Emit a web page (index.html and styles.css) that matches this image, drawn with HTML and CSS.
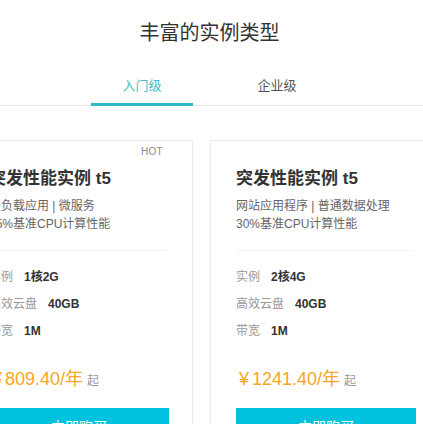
FILE: index.html
```html
<!DOCTYPE html>
<html lang="zh-CN">
<head>
<meta charset="utf-8">
<link rel="stylesheet" href="styles.css">
</head>
<body>
<div class="page">
  <h1 class="title">丰富的实例类型</h1>
  <div class="tabs">
    <div class="tab active">入门级</div>
    <div class="tab">企业级</div>
  </div>
  <div class="cards">
    <div class="card">
      <span class="hot">HOT</span>
      <div class="card-title">突发性能实例 t5</div>
      <div class="desc">轻负载应用 | 微服务<br>15%基准CPU计算性能</div>
      <div class="divider"></div>
      <div class="specs">
        <div class="row"><span class="label">实例</span><span class="value">1核2G</span></div>
        <div class="row"><span class="label">高效云盘</span><span class="value">40GB</span></div>
        <div class="row"><span class="label">带宽</span><span class="value">1M</span></div>
      </div>
      <div class="price"><span class="amount"><span class="yen">¥</span>809.40/年</span><span class="from">起</span></div>
      <button class="buy">立即购买</button>
    </div>
    <div class="card">
      <div class="card-title">突发性能实例 t5</div>
      <div class="desc">网站应用程序 | 普通数据处理<br>30%基准CPU计算性能</div>
      <div class="divider"></div>
      <div class="specs">
        <div class="row"><span class="label">实例</span><span class="value">2核4G</span></div>
        <div class="row"><span class="label">高效云盘</span><span class="value">40GB</span></div>
        <div class="row"><span class="label">带宽</span><span class="value">1M</span></div>
      </div>
      <div class="price"><span class="amount"><span class="yen">¥</span>1241.40/年</span><span class="from">起</span></div>
      <button class="buy">立即购买</button>
    </div>
  </div>
</div>
</body>
</html>
```
FILE: styles.css
```css
* { box-sizing: border-box; }
html, body {
  margin: 0;
  padding: 0;
  background: #fff;
  overflow: hidden;
}
body {
  font-family: "Liberation Sans", "Noto Sans CJK SC", sans-serif;
  color: #333;
  width: 423px;
  height: 424px;
}
.page {
  width: 423px;
  height: 424px;
  overflow: hidden;
}
.title {
  margin: 0;
  padding-top: 20px;
  height: 46px;
  line-height: 26px;
  font-size: 20px;
  font-weight: normal;
  text-align: center;
  color: #333;
  padding-right: 4px;
}
.tabs {
  margin-top: 28px;
  display: flex;
  justify-content: center;
  gap: 33px;
  border-bottom: 1px solid #e6e6e6;
  padding-right: 4px;
}
.tab {
  width: 102px;
  height: 32px;
  line-height: 24px;
  font-size: 13px;
  text-align: center;
  color: #555;
  margin-bottom: -1px;
}
.tab.active {
  color: #3cbfc9;
  border-bottom: 3px solid #33b8c6;
}
.cards {
  margin-top: 34px;
  display: flex;
  gap: 17px;
  margin-left: -37px;
}
.card {
  position: relative;
  flex: 0 0 230px;
  width: 230px;
  height: 320px;
  border: 1px solid #ececec;
  box-shadow: 0 1px 4px rgba(0, 0, 0, 0.04);
  padding: 26px 25px 0 25px;
  background: #fff;
}
.hot {
  position: absolute;
  top: 5px;
  right: 29px;
  font-size: 10px;
  color: #888;
  letter-spacing: 0.3px;
}
.card-title {
  font-size: 17px;
  font-weight: bold;
  line-height: 24px;
  color: #333;
  white-space: nowrap;
}
.desc {
  margin-top: 6px;
  font-size: 12px;
  line-height: 18px;
  color: #666;
  white-space: nowrap;
}
.divider {
  margin-top: 17px;
  height: 1px;
  background: #f4f4f4;
}
.specs {
  margin-top: 13px;
}
.row {
  height: 27px;
  line-height: 27px;
  font-size: 12px;
  white-space: nowrap;
}
.label {
  color: #999;
  margin-right: 11px;
}
.value {
  color: #333;
  font-size: 12px;
  font-weight: bold;
}
.price {
  margin-top: 22px;
  height: 24px;
  line-height: 24px;
  white-space: nowrap;
}
.amount {
  font-size: 18px;
  color: #f6a623;
}
.yen {
  margin-left: 3px;
  margin-right: 3px;
}
.from {
  font-size: 12px;
  color: #999;
  margin-left: 4px;
}
.buy {
  display: block;
  margin-top: 17px;
  width: 180px;
  height: 36px;
  border: none;
  background: #00c1de;
  color: #fff;
  font-family: inherit;
  font-size: 14px;
  padding: 0;
}
```
